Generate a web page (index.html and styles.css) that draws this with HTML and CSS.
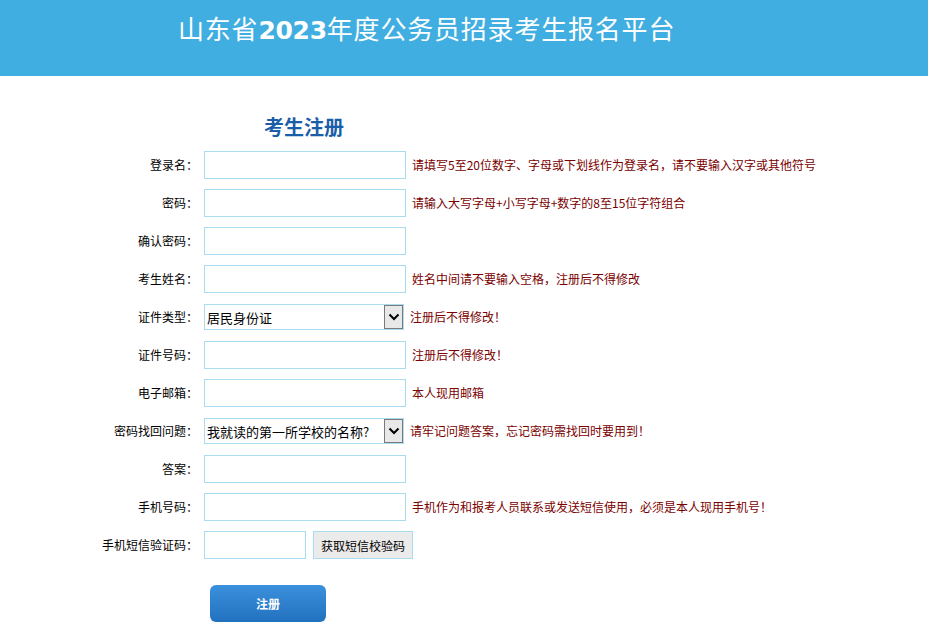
FILE: index.html
```html
<!DOCTYPE html>
<html lang="zh-CN">
<head>
  <meta charset="UTF-8" />
  <title>山东省2023年度公务员招录考生报名平台</title>
  <link rel="stylesheet" href="styles.css">
</head>
<body>
  <div class="header">
    <h1>山东省<b>2023</b>年度公务员招录考生报名平台</h1>
  </div>

  <div class="main">
    <h2 class="reg-title">考生注册</h2>

    <div class="form">
      <div class="row">
        <label>登录名：</label>
        <input type="text" class="txt">
        <span class="tip">请填写5至20位数字、字母或下划线作为登录名，请不要输入汉字或其他符号</span>
      </div>
      <div class="row">
        <label>密码：</label>
        <input type="password" class="txt">
        <span class="tip">请输入大写字母+小写字母+数字的8至15位字符组合</span>
      </div>
      <div class="row">
        <label>确认密码：</label>
        <input type="password" class="txt">
      </div>
      <div class="row">
        <label>考生姓名：</label>
        <input type="text" class="txt">
        <span class="tip">姓名中间请不要输入空格，注册后不得修改</span>
      </div>
      <div class="row">
        <label>证件类型：</label>
        <div class="sel-wrap">
          <select class="sel">
            <option>居民身份证</option>
          </select>
          <span class="sel-btn">
            <svg width="12" height="8" viewBox="0 0 12 8"><path d="M1.5 1.5 L6 6 L10.5 1.5" fill="none" stroke="#000" stroke-width="2"/></svg>
          </span>
        </div>
        <span class="tip tip-sel">注册后不得修改！</span>
      </div>
      <div class="row">
        <label>证件号码：</label>
        <input type="text" class="txt">
        <span class="tip">注册后不得修改！</span>
      </div>
      <div class="row">
        <label>电子邮箱：</label>
        <input type="text" class="txt">
        <span class="tip">本人现用邮箱</span>
      </div>
      <div class="row">
        <label>密码找回问题：</label>
        <div class="sel-wrap">
          <select class="sel">
            <option>我就读的第一所学校的名称?</option>
          </select>
          <span class="sel-btn">
            <svg width="12" height="8" viewBox="0 0 12 8"><path d="M1.5 1.5 L6 6 L10.5 1.5" fill="none" stroke="#000" stroke-width="2"/></svg>
          </span>
        </div>
        <span class="tip tip-sel">请牢记问题答案，忘记密码需找回时要用到！</span>
      </div>
      <div class="row">
        <label>答案：</label>
        <input type="text" class="txt">
      </div>
      <div class="row">
        <label>手机号码：</label>
        <input type="text" class="txt">
        <span class="tip">手机作为和报考人员联系或发送短信使用，必须是本人现用手机号！</span>
      </div>
      <div class="row">
        <label>手机短信验证码：</label>
        <input type="text" class="txt txt-short">
        <button type="button" class="sms-btn">获取短信校验码</button>
      </div>

      <div class="btn-row">
        <button type="button" class="submit">注册</button>
      </div>
    </div>
  </div>
</body>
</html>
```

FILE: styles.css
```css
* { box-sizing: border-box; margin: 0; padding: 0; }

body {
  font-family: "Noto Sans CJK SC", "Liberation Sans", sans-serif;
  font-size: 12px;
  color: #000;
  background: #fff;
}

.header {
  height: 76px;
  background: #40aee0;
  padding: 13px 0 0 178px;
}

.header h1 {
  font-size: 26px;
  line-height: 30px;
  font-weight: normal;
  color: #fff;
  letter-spacing: 0.8px;
}

.header h1 b {
  font-family: "DejaVu Sans", sans-serif;
  font-weight: bold;
  font-size: 25px;
  letter-spacing: -0.3px;
}

.main {
  padding-top: 36px;
}

.reg-title {
  font-size: 20px;
  line-height: 30px;
  font-weight: bold;
  color: #1a5ea9;
  padding-left: 264px;
  margin-bottom: 9px;
}

.row {
  display: flex;
  align-items: center;
  height: 28px;
  margin-bottom: 10px;
}

.row label {
  width: 198px;
  text-align: right;
  line-height: 16px;
  margin-right: 6px;
}

.txt {
  width: 202px;
  height: 28px;
  border: 1px solid #a9dcee;
  outline: none;
  padding: 0 4px;
  font-size: 13px;
  font-family: inherit;
}

.txt-short {
  width: 102px;
}

.tip {
  margin-left: 6px;
  color: #7a0000;
  line-height: 16px;
  white-space: nowrap;
}

.tip-sel {
  margin-left: 6px;
}

.sel-wrap {
  position: relative;
  width: 200px;
  height: 26px;
}

.sel {
  appearance: none;
  -webkit-appearance: none;
  width: 200px;
  height: 26px;
  border: 1px solid #a9dcee;
  background: #fff;
  padding: 0 22px 0 2px;
  font-size: 13px;
  font-family: inherit;
  color: #000;
  outline: none;
}

.sel-btn {
  position: absolute;
  top: 1px;
  right: 1px;
  width: 19px;
  height: 24px;
  background: #e8e8e8;
  border: 1px solid #7a7a7a;
  display: flex;
  align-items: center;
  justify-content: center;
  pointer-events: none;
}

.sms-btn {
  margin-left: 7px;
  width: 100px;
  height: 28px;
  background: #ebebeb;
  border: 1px solid #a9dcee;
  font-family: inherit;
  font-size: 12px;
  color: #000;
  cursor: pointer;
}

.btn-row {
  padding: 16px 0 0 210px;
}

.submit {
  width: 116px;
  height: 37px;
  border: none;
  border-radius: 6px;
  background: linear-gradient(180deg, #3b90dc, #2271bf);
  color: #fff;
  font-family: inherit;
  font-size: 12px;
  font-weight: bold;
  cursor: pointer;
}
```
